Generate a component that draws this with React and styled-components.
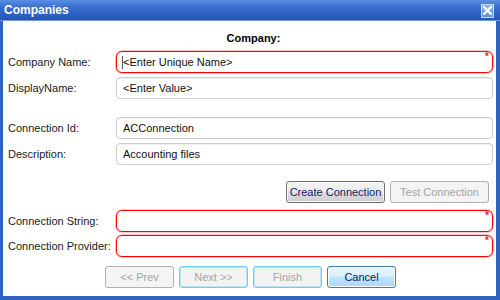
import React from "react";
import styled, { createGlobalStyle } from "styled-components";

const Global = createGlobalStyle`
  html, body { margin: 0; padding: 0; }
  body { width: 500px; height: 300px; overflow: hidden; font-family: "Liberation Sans", Arial, sans-serif; }
`;

const Frame = styled.div`
  box-sizing: border-box;
  width: 500px;
  height: 300px;
  background: #2f63c2;
  display: flex;
  flex-direction: column;
  padding: 0 4px 4px 3px;
`;

const TitleBar = styled.div`
  height: 20px;
  margin: 0 -4px 0 -3px;
  padding: 0 6px 0 4px;
  display: flex;
  align-items: center;
  justify-content: space-between;
  background: linear-gradient(#5a8fe2 0%, #3a6fcf 35%, #2b60c2 75%, #2354b4 100%);
  border-bottom: 1px solid #6f9be0;
`;

const Title = styled.span`
  color: #fff;
  font-weight: bold;
  font-size: 12px;
  font-family: "Liberation Sans", Arial, sans-serif;
`;

const CloseBtn = styled.div`
  width: 11px;
  height: 12px;
  border: 1px solid #c8dcf6;
  background: linear-gradient(#8fb4ea, #5f8fdc);
  display: flex;
  align-items: center;
  justify-content: center;
  margin-top: 1px;
`;

const Body = styled.div`
  flex: 1;
  background: #fff;
  display: flex;
  flex-direction: column;
  padding: 10px 3px 0 5px;
  color: #1c1c1c;
  font-size: 11px;
`;

const Heading = styled.div`
  text-align: center;
  font-weight: bold;
  font-size: 11px;
  color: #000;
  height: 15px;
  line-height: 15px;
  padding-left: 6px;
`;

const Row = styled.div`
  display: grid;
  grid-template-columns: 108px 1fr;
  align-items: center;
  margin-top: ${(p) => p.$mt}px;
`;

const Label = styled.label`
  font-size: 11px;
  color: #1a1a1a;
  white-space: nowrap;
`;

const Field = styled.div`
  position: relative;
  box-sizing: border-box;
  height: 22px;
  border: 1px solid ${(p) => (p.$required ? "#ff0000" : "#c9ccd2")};
  border-radius: ${(p) => (p.$required ? "6px" : "4px")};
  box-shadow: ${(p) => (p.$required ? "0 0 0 0.6px rgba(255,0,0,0.45)" : "inset 0 1px 0 #eef0f2")};
  display: flex;
  align-items: center;
  padding-left: 6px;
  font-size: 11px;
  color: #111;
  white-space: nowrap;
`;

const Star = styled.span`
  position: absolute;
  right: 3px;
  top: 0px;
  color: #ff2020;
  font-size: 10px;
  line-height: 10px;
  font-weight: bold;
`;

const Caret = styled.span`
  display: inline-block;
  width: 1px;
  height: 13px;
  background: #555;
  margin-left: -1px;
`;

const ButtonRow = styled.div`
  display: flex;
  justify-content: ${(p) => p.$justify};
  gap: ${(p) => p.$gap}px;
  margin-top: ${(p) => p.$mt}px;
  padding-right: ${(p) => p.$pr || 0}px;
`;

const Button = styled.div`
  box-sizing: border-box;
  width: ${(p) => p.$w}px;
  height: 22px;
  border-radius: 3px;
  display: flex;
  align-items: center;
  justify-content: center;
  font-size: 11px;
  white-space: nowrap;
  ${(p) =>
    p.$variant === "normal"
      ? `border: 1px solid #707070; background: linear-gradient(#f4f4f4 0%, #ebebeb 50%, #dddddd 51%, #cfcfcf 100%); box-shadow: inset 0 0 0 1px #f8f8f8; color: #14216b;`
      : p.$variant === "focus"
      ? `border: 1px solid #6fcdf0; box-shadow: inset 0 0 0 1px #b6e6f8; background: #f3f3f3; color: #a4a4a4;`
      : p.$variant === "hot"
      ? `border: 1px solid #3c7fb1; background: linear-gradient(#eaf6fd 0%, #d9f0fc 45%, #bee6fd 50%, #a7d9f5 100%); box-shadow: inset 0 0 0 1px #fdfeff; color: #14216b;`
      : `border: 1px solid #adb2b5; background: #f4f4f4; color: #a3a3a3;`}
`;

const CloseIcon = () => (
  <svg width="9" height="9" viewBox="0 0 9 9">
    <path d="M1 1 L8 8 M8 1 L1 8" stroke="#fff" strokeWidth="2.2" strokeLinecap="square" />
  </svg>
);

export default function App() {
  return (
    <>
      <Global />
      <Frame>
        <TitleBar>
          <Title>Companies</Title>
          <CloseBtn>
            <CloseIcon />
          </CloseBtn>
        </TitleBar>
        <Body>
          <Heading>Company:</Heading>
          <Row $mt={5}>
            <Label>Company Name:</Label>
            <Field $required>
              <Caret />
              &lt;Enter Unique Name&gt;
              <Star>*</Star>
            </Field>
          </Row>
          <Row $mt={4}>
            <Label>DisplayName:</Label>
            <Field>&lt;Enter Value&gt;</Field>
          </Row>
          <Row $mt={18}>
            <Label>Connection Id:</Label>
            <Field>ACConnection</Field>
          </Row>
          <Row $mt={4}>
            <Label>Description:</Label>
            <Field>Accounting files</Field>
          </Row>
          <ButtonRow $justify="flex-end" $gap={5} $mt={16} $pr={4}>
            <Button $w={99} $variant="normal">Create Connection</Button>
            <Button $w={99} $variant="disabled">Test Connection</Button>
          </ButtonRow>
          <Row $mt={7}>
            <Label>Connection String:</Label>
            <Field $required>
              <Star>*</Star>
            </Field>
          </Row>
          <Row $mt={3}>
            <Label>Connection Provider:</Label>
            <Field $required>
              <Star>*</Star>
            </Field>
          </Row>
          <ButtonRow $justify="center" $gap={5} $mt={9}>
            <Button $w={69} $variant="disabled">&lt;&lt; Prev</Button>
            <Button $w={69} $variant="focus">Next &gt;&gt;</Button>
            <Button $w={69} $variant="focus">Finish</Button>
            <Button $w={69} $variant="hot">Cancel</Button>
          </ButtonRow>
        </Body>
      </Frame>
    </>
  );
}
